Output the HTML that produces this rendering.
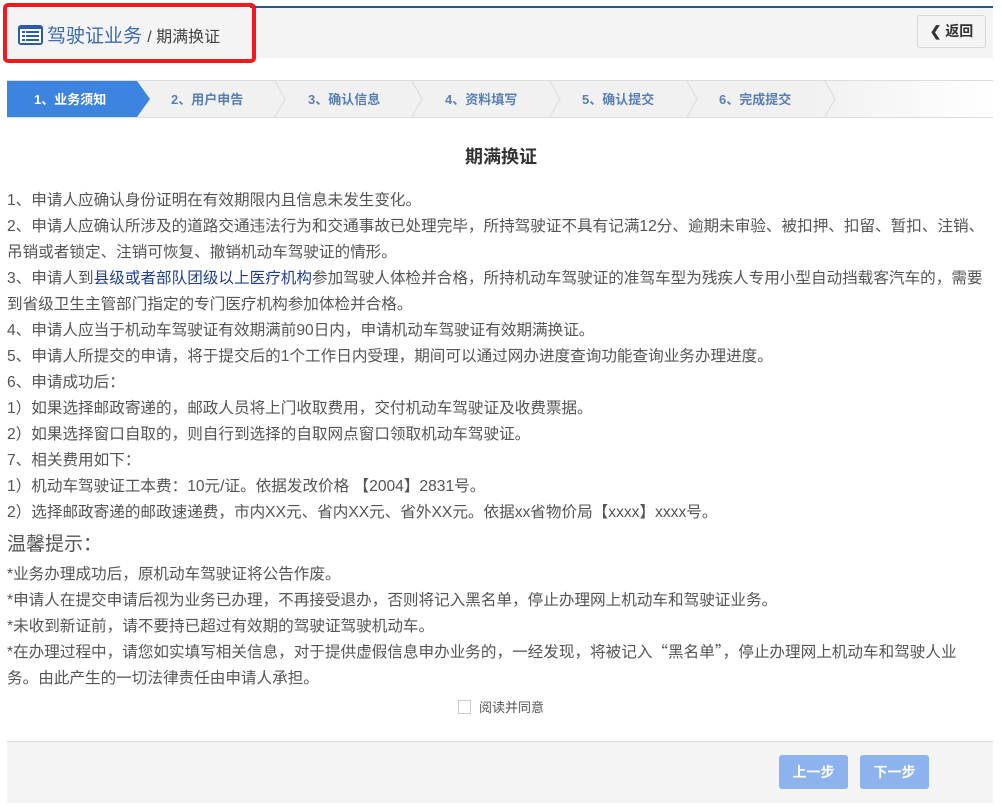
<!DOCTYPE html>
<html><head><meta charset="utf-8"><style>
*{margin:0;padding:0;box-sizing:border-box}
body{width:1002px;height:809px;background:#fff;font-family:"Liberation Sans","Microsoft YaHei","Noto Sans CJK SC",sans-serif;color:#555;position:relative;overflow:hidden}
.topline{position:absolute;left:250px;top:6px;width:743px;height:2px;background:#2a5590}
.hdr{position:absolute;left:7px;top:8px;width:986px;height:50px;background:#f4f4f4}
.red{position:absolute;left:3px;top:3px;width:253px;height:60px;border:4px solid #f2191c;border-radius:5px}
.ttl{position:absolute;left:47px;top:21px;font-size:19px;color:#3b6cb4;white-space:nowrap}
.ttl span{font-size:16px;color:#444}
.back{position:absolute;left:917px;top:15px;width:69px;height:33px;border:1px solid #d6d6d6;border-radius:3px;background:#f4f4f4;font-size:14px;color:#333;font-weight:bold;text-align:center;line-height:31px}
.steps{position:absolute;left:7px;top:80px;width:986px;height:38px;background:linear-gradient(90deg,#f1f1f1 82%,#fff);border-top:1px solid #ddd;border-bottom:1px solid #ddd}
.s{position:absolute;top:1px;height:36px;line-height:36px;font-size:13px;font-weight:bold;color:#5a7fb5;white-space:nowrap}
.title{position:absolute;left:0;width:1002px;top:143px;text-align:center;font-size:18px;font-weight:bold;color:#333}
.txt{position:absolute;left:7px;top:188px;font-size:15.6px;line-height:26px;white-space:nowrap}
.txt div{height:26px;overflow:visible}
.txt div.tip{height:34px}
.txt b{font-weight:normal;color:#1f3f8f}
.q{font-family:"Noto Sans CJK SC",sans-serif;line-height:1}
.tip{font-size:19px;line-height:34px;color:#555;margin-top:2px}
.chk{position:absolute;left:458px;top:700px;width:13px;height:14px;border:1px solid #ccc}
.agree{position:absolute;left:479px;top:697px;font-size:13px;color:#555}
.foot{position:absolute;left:7px;top:741px;width:986px;height:62px;background:#f4f4f4;border-top:1px solid #ddd}
.btn{position:absolute;top:755px;width:69px;height:34px;background:#8db3ef;border-radius:3px;color:#fff;font-size:14px;font-weight:bold;text-align:center;line-height:34px}
</style></head><body>
<div class="topline"></div>
<div class="hdr"></div>
<div class="red"></div>
<svg style="position:absolute;left:18px;top:25px" width="25" height="20" viewBox="0 0 25 20"><rect x="0" y="0" width="25" height="20" rx="3" fill="#2a5ca8"/><rect x="2" y="4" width="21" height="14" fill="#fff"/><g fill="#2a5ca8"><rect x="4" y="6" width="3" height="2"/><rect x="8" y="6" width="13" height="2"/><rect x="4" y="10" width="3" height="2"/><rect x="8" y="10" width="13" height="2"/><rect x="4" y="14" width="3" height="2"/><rect x="8" y="14" width="13" height="2"/></g></svg>
<div class="ttl">驾驶证业务 <span>/ 期满换证</span></div>
<div class="back">❮ 返回</div>
<div class="steps">
<svg style="position:absolute;left:0;top:0" width="830" height="36"><polygon points="0,0 130,0 143,18 130,36 0,36" fill="#3d83e0"/><g stroke="#e2e2e2" stroke-width="1.5" fill="none"><polyline points="268,0 278,18 268,36"/><polyline points="405,0 415,18 405,36"/><polyline points="543,0 553,18 543,36"/><polyline points="680,0 690,18 680,36"/><polyline points="818,0 828,18 818,36"/></g></svg>
<div class="s" style="left:27px;color:#fff">1、业务须知</div>
<div class="s" style="left:164px">2、用户申告</div>
<div class="s" style="left:301px">3、确认信息</div>
<div class="s" style="left:438px">4、资料填写</div>
<div class="s" style="left:575px">5、确认提交</div>
<div class="s" style="left:712px">6、完成提交</div>
</div>
<div class="title">期满换证</div>
<div class="txt">
<div>1、申请人应确认身份证明在有效期限内且信息未发生变化。</div>
<div>2、申请人应确认所涉及的道路交通违法行为和交通事故已处理完毕，所持驾驶证不具有记满12分、逾期未审验、被扣押、扣留、暂扣、注销、</div>
<div>吊销或者锁定、注销可恢复、撤销机动车驾驶证的情形。</div>
<div>3、申请人到<b>县级或者部队团级以上医疗机构</b>参加驾驶人体检并合格，所持机动车驾驶证的准驾车型为残疾人专用小型自动挡载客汽车的，需要</div>
<div>到省级卫生主管部门指定的专门医疗机构参加体检并合格。</div>
<div>4、申请人应当于机动车驾驶证有效期满前90日内，申请机动车驾驶证有效期满换证。</div>
<div>5、申请人所提交的申请，将于提交后的1个工作日内受理，期间可以通过网办进度查询功能查询业务办理进度。</div>
<div>6、申请成功后：</div>
<div>1）如果选择邮政寄递的，邮政人员将上门收取费用，交付机动车驾驶证及收费票据。</div>
<div>2）如果选择窗口自取的，则自行到选择的自取网点窗口领取机动车驾驶证。</div>
<div>7、相关费用如下：</div>
<div>1）机动车驾驶证工本费：10元/证。依据发改价格 【2004】2831号。</div>
<div>2）选择邮政寄递的邮政速递费，市内XX元、省内XX元、省外XX元。依据xx省物价局【xxxx】xxxx号。</div>
<div class="tip">温馨提示：</div>
<div>*业务办理成功后，原机动车驾驶证将公告作废。</div>
<div>*申请人在提交申请后视为业务已办理，不再接受退办，否则将记入黑名单，停止办理网上机动车和驾驶证业务。</div>
<div>*未收到新证前，请不要持已超过有效期的驾驶证驾驶机动车。</div>
<div>*在办理过程中，请您如实填写相关信息，对于提供虚假信息申办业务的，一经发现，将被记入<span class="q">“</span>黑名单<span class="q">”</span>，停止办理网上机动车和驾驶人业</div>
<div>务。由此产生的一切法律责任由申请人承担。</div>
</div>
<div class="chk"></div>
<div class="agree">阅读并同意</div>
<div class="foot"></div>
<div class="btn" style="left:779px">上一步</div>
<div class="btn" style="left:860px">下一步</div>
</body></html>
